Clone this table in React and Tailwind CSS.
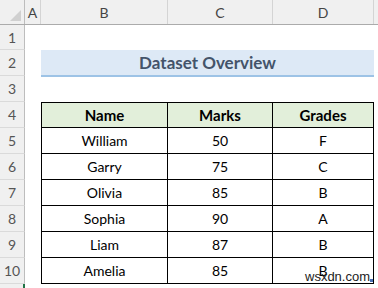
const rows = [
  { name: "William", marks: 50, grade: "F" },
  { name: "Garry", marks: 75, grade: "C" },
  { name: "Olivia", marks: 85, grade: "B" },
  { name: "Sophia", marks: 90, grade: "A" },
  { name: "Liam", marks: 87, grade: "B" },
  { name: "Amelia", marks: 85, grade: "B" },
]

function RowNum({ n, active }) {
  return (
    <div
      className={
        "w-[25px] shrink-0 flex items-center justify-center bg-[#f0f0f0] border-b border-b-[#dadada] text-[14px] text-[#555] " +
        (active ? "border-r-2 border-r-[#217346]" : "border-r border-r-[#bdbdbd]")
      }
    >
      {n}
    </div>
  )
}

function ColHead({ label, w }) {
  return (
    <div className={`${w} shrink-0 h-full flex items-center justify-center border-r border-r-[#d4d4d4] text-[14px] text-[#444]`}>
      {label}
    </div>
  )
}

export default function App() {
  return (
    <div
      className="relative w-[378px] h-[288px] overflow-hidden bg-white"
      style={{ fontFamily: "Lato, 'Open Sans', sans-serif" }}
    >
      {/* Column headers */}
      <div className="flex h-[25px] bg-[#f0f0f0] border-b border-b-[#ababab]">
        <div className="relative w-[25px] shrink-0 border-r border-r-[#bdbdbd]">
          <svg className="absolute right-[3px] bottom-[3px]" width="11" height="11" viewBox="0 0 11 11">
            <polygon points="11,0 11,11 0,11" fill="#d0d0d0" />
          </svg>
        </div>
        <ColHead label="A" w="w-[16px]" />
        <ColHead label="B" w="w-[127px]" />
        <ColHead label="C" w="w-[105px]" />
        <ColHead label="D" w="w-[101px]" />
        <div className="flex-1" />
      </div>

      {/* Row 1 */}
      <div className="flex h-[25px]">
        <RowNum n={1} />
      </div>

      {/* Row 2: title */}
      <div className="flex h-[26px]">
        <RowNum n={2} />
        <div className="w-[16px] shrink-0" />
        <div className="w-[333px] shrink-0 h-[27px] bg-[#dde9f6] border-b-2 border-b-[#9dc3e6] flex items-center justify-center text-[17px] font-bold text-[#44546a]">
          Dataset Overview
        </div>
      </div>

      {/* Row 3 */}
      <div className="flex h-[26px]">
        <RowNum n={3} />
      </div>

      {/* Row 4: table head */}
      <div className="flex h-[26px]">
        <RowNum n={4} />
        <div className="w-[16px] shrink-0" />
        <div className="flex bg-[#e2efda] border-t border-l border-black text-[15px] font-bold text-black">
          <div className="w-[126px] flex items-center justify-center border-r border-b border-black">Name</div>
          <div className="w-[105px] flex items-center justify-center border-r border-b border-black">Marks</div>
          <div className="w-[101px] flex items-center justify-center border-r border-b border-black">Grades</div>
        </div>
      </div>

      {rows.map((r, i) => (
        <div key={r.name} className="flex h-[26px]">
          <RowNum n={i + 5} />
          <div className="w-[16px] shrink-0" />
          <div className="flex border-l border-black text-[14px] text-black">
            <div className="w-[126px] flex items-center justify-center border-r border-b border-black">{r.name}</div>
            <div className="w-[105px] flex items-center justify-center border-r border-b border-black">{r.marks}</div>
            <div className="w-[101px] flex items-center justify-center border-r border-b border-black">{r.grade}</div>
          </div>
        </div>
      ))}

      {/* Row 11 (only its top edge is visible) */}
      <div className="flex h-[26px]">
        <RowNum n="" active />
      </div>

      {/* watermark */}
      <div
        className="absolute left-[305px] top-[270px] text-[13px] text-[#222] leading-none"
        style={{ fontFamily: "'Liberation Sans', Arial, sans-serif" }}
      >
        wsxdn.com
      </div>
      <div className="absolute left-[370px] top-[279px] w-[3px] h-[3px] bg-[#4a6fb5]" />
    </div>
  )
}
